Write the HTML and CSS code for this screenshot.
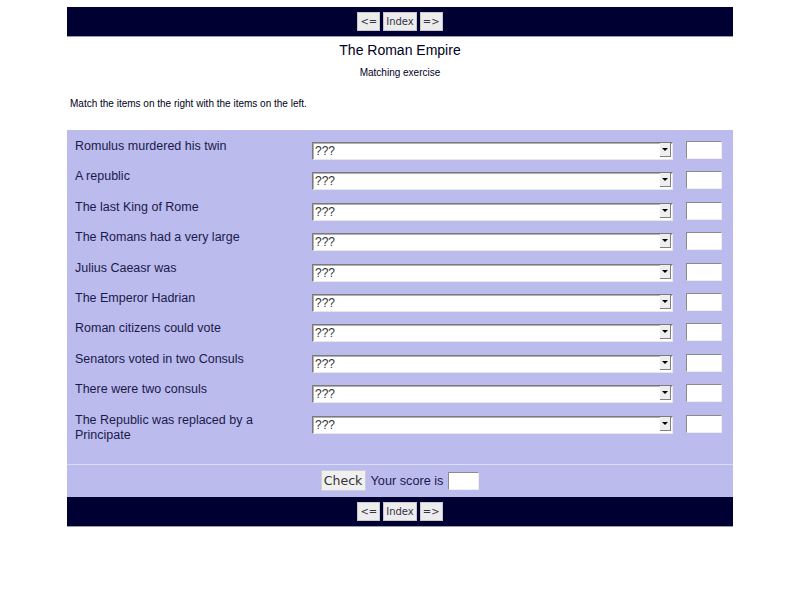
FILE: index.html
```html
<!DOCTYPE html>
<html>
<head>
<meta charset="utf-8">
<title>The Roman Empire</title>
<link rel="stylesheet" href="styles.css">
</head>
<body>
<div class="page">
  <div class="navbar">
    <button class="navbtn">&lt;=</button>
    <button class="navbtn">Index</button>
    <button class="navbtn">=&gt;</button>
  </div>
  <h2 class="title">The Roman Empire</h2>
  <h3 class="subtitle">Matching exercise</h3>
  <p class="intro">Match the items on the right with the items on the left.</p>
  <div class="panel">
    <div class="rows">
      <div class="row"><div class="label">Romulus murdered his twin</div><div class="sel"><select><option>???</option></select><span class="arrow"></span></div><input class="ans" type="text"></div>
      <div class="row"><div class="label">A republic</div><div class="sel"><select><option>???</option></select><span class="arrow"></span></div><input class="ans" type="text"></div>
      <div class="row"><div class="label">The last King of Rome</div><div class="sel"><select><option>???</option></select><span class="arrow"></span></div><input class="ans" type="text"></div>
      <div class="row"><div class="label">The Romans had a very large</div><div class="sel"><select><option>???</option></select><span class="arrow"></span></div><input class="ans" type="text"></div>
      <div class="row"><div class="label">Julius Caeasr was</div><div class="sel"><select><option>???</option></select><span class="arrow"></span></div><input class="ans" type="text"></div>
      <div class="row"><div class="label">The Emperor Hadrian</div><div class="sel"><select><option>???</option></select><span class="arrow"></span></div><input class="ans" type="text"></div>
      <div class="row"><div class="label">Roman citizens could vote</div><div class="sel"><select><option>???</option></select><span class="arrow"></span></div><input class="ans" type="text"></div>
      <div class="row"><div class="label">Senators voted in two Consuls</div><div class="sel"><select><option>???</option></select><span class="arrow"></span></div><input class="ans" type="text"></div>
      <div class="row"><div class="label">There were two consuls</div><div class="sel"><select><option>???</option></select><span class="arrow"></span></div><input class="ans" type="text"></div>
      <div class="row"><div class="label">The Republic was replaced by a Principate</div><div class="sel"><select><option>???</option></select><span class="arrow"></span></div><input class="ans" type="text"></div>
    </div>
    <div class="check-row">
      <button class="check">Check</button>
      <span class="score-label">Your score is</span>
      <input class="score" type="text">
    </div>
  </div>
  <div class="navbar">
    <button class="navbtn">&lt;=</button>
    <button class="navbtn">Index</button>
    <button class="navbtn">=&gt;</button>
  </div>
</div>
</body>
</html>
```

FILE: styles.css
```css
html, body {
  margin: 0;
  padding: 0;
  background: #ffffff;
}
body {
  font-family: "Liberation Sans", Arial, sans-serif;
  color: #000033;
}
.page {
  width: 666px;
  margin: 7px auto 0;
}
.navbar {
  height: 30px;
  background: #000033;
  display: flex;
  justify-content: center;
  align-items: center;
  gap: 3px;
  border-bottom: 1px solid #9a9ab0;
  box-sizing: border-box;
}
.navbtn {
  font-family: "DejaVu Sans", Verdana, sans-serif;
  font-size: 10px;
  color: #333344;
  background: #ececec;
  border: 1px solid #c8c8c8;
  height: 19px;
  padding: 0 2px;
  margin: 0;
  line-height: 17px;
  border-radius: 0;
}
.title {
  margin: 4px 0 0;
  font-size: 14px;
  font-weight: normal;
  line-height: 18px;
  text-align: center;
  color: #000022;
}
.subtitle {
  margin: 8px 0 0;
  font-size: 10px;
  font-weight: normal;
  line-height: 12px;
  text-align: center;
  color: #000022;
}
.intro {
  margin: 19px 0 0;
  padding-left: 3px;
  font-size: 10px;
  line-height: 12px;
  color: #000022;
}
.panel {
  margin-top: 20px;
  background: #bbbbee;
}
.rows {
  padding: 9px 11px 21px 8px;
  display: flex;
  flex-direction: column;
  gap: 10.4px;
}
.row {
  display: grid;
  grid-template-columns: 224px 361px 36px;
  column-gap: 13px;
  align-items: start;
}
.label {
  font-size: 12.5px;
  line-height: 15px;
  color: #1a1a4a;
}
.sel {
  position: relative;
  margin-top: 2px;
  height: 18px;
}
.sel select {
  appearance: none;
  -webkit-appearance: none;
  width: 100%;
  height: 18px;
  margin: 0;
  padding: 0 0 0 2px;
  background: #ffffff;
  border: 1px solid;
  border-color: #7a7a7a #e8e8e8 #e8e8e8 #7a7a7a;
  box-shadow: inset 1px 1px 0 #b0b0b0;
  border-radius: 0;
  font-family: "Liberation Sans", Arial, sans-serif;
  font-size: 12px;
  color: #333333;
  box-sizing: border-box;
  line-height: 16px;
}
.arrow {
  position: absolute;
  right: 2px;
  top: 2px;
  width: 11px;
  height: 14px;
  background: #eeeeee;
  border-right: 1px solid #808080;
  border-bottom: 1px solid #808080;
  box-sizing: border-box;
  pointer-events: none;
}
.arrow::after {
  content: "";
  position: absolute;
  left: 2px;
  top: 5px;
  border-left: 3px solid transparent;
  border-right: 3px solid transparent;
  border-top: 3px solid #000000;
}
.ans {
  margin: 2px 0 0;
  width: 36px;
  height: 18px;
  padding: 0;
  background: #ffffff;
  border: 1px solid;
  border-color: #8a8a8a #eeeeee #eeeeee #8a8a8a;
  box-sizing: border-box;
  border-radius: 0;
}
.check-row {
  height: 32px;
  border-top: 1px solid #dcdcf6;
  display: flex;
  justify-content: center;
  align-items: center;
  box-sizing: content-box;
}
.check {
  font-family: "DejaVu Sans", Verdana, sans-serif;
  font-size: 12.5px;
  color: #333333;
  background: #f0f0f0;
  border: 1px solid #cfcfcf;
  height: 21px;
  width: 45px;
  padding: 0;
  margin: 0 5px 0 0;
  border-radius: 0;
}
.score-label {
  font-size: 12.7px;
  color: #1a1a4a;
  margin-right: 5px;
}
.score {
  width: 31px;
  height: 18px;
  margin: 0;
  padding: 0;
  background: #ffffff;
  border: 1px solid;
  border-color: #8a8a8a #eeeeee #eeeeee #8a8a8a;
  box-sizing: border-box;
  border-radius: 0;
}
```
